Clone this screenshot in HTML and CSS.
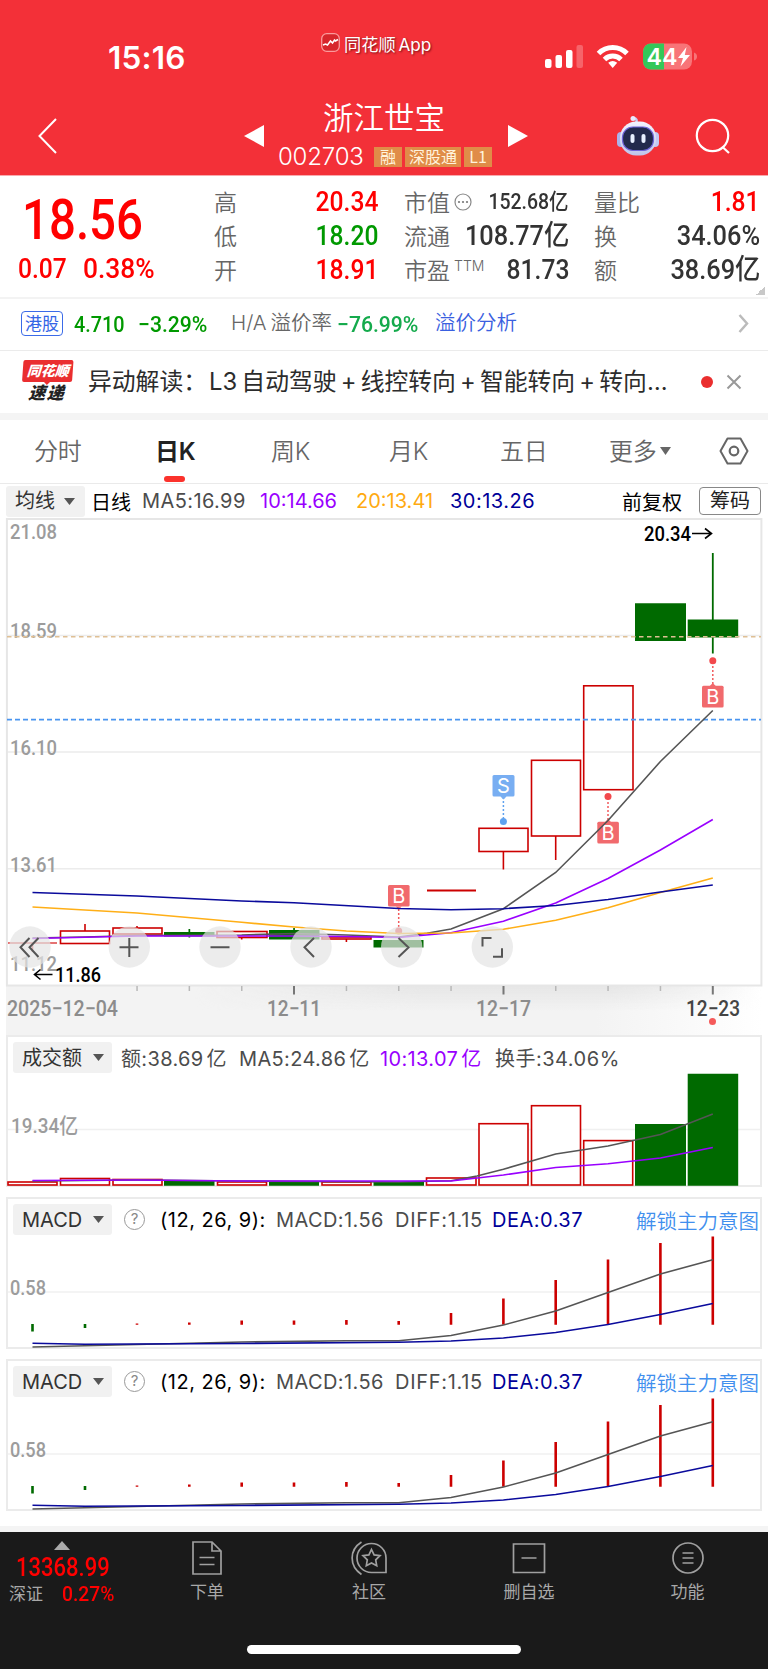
FILE: index.html
```html
<!DOCTYPE html>
<html lang="zh-CN">
<head>
<meta charset="utf-8">
<title>浙江世宝 002703</title>
<link rel="stylesheet" href="styles.css">
</head>
<body>
<svg width="0" height="0" class="defs">
  <defs>
    <g id="caret"><path d="M0 0h11l-5.500 7z" fill="#555"/></g>
    <g id="macd">
      <path d="M8 1292H760" stroke="#f0f0f0" stroke-width="1.500"/>
      <text x="10" y="1295" class="axis" textLength="36" lengthAdjust="spacingAndGlyphs">0.58</text>
      <path d="M32.500 1324v7.500M85 1324v4" stroke="#006a00" stroke-width="2.600"/>
      <path d="M137 1323.500v1.200M189.300 1322.500v2.200M241.700 1320.500v4.200M294 1320.500v4.200M346.400 1320v4.700M398.700 1321v3.700M451 1313v11.700M503.400 1298.500v26.200M555.700 1280v44.700M608 1259.500v65.200M660.400 1243v81.700M712.800 1236.500v88.200" stroke="#cc0000" stroke-width="2.600"/>
      <polyline class="ma gray" points="32.500,1347 137,1344.500 241.700,1342 346,1340.700 398.700,1340.700 451,1335.500 503.400,1325 555.700,1311 608,1292.500 660.400,1274 712.800,1259.700"/>
      <polyline class="ma navy" points="32.500,1343.300 85,1344.300 241.700,1343.500 398.700,1342.300 451,1341 503.400,1338 555.700,1332.500 608,1324.500 660.400,1314.500 712.800,1303.500"/>
    </g>
  </defs>
</svg>

<header class="top">
  <div class="status">
    <span class="time">15:16</span>
    <span class="brand">
      <svg width="19" height="19" viewBox="0 0 19 19"><rect x=".7" y=".7" width="17.600" height="17.600" rx="5" fill="#d7262c" stroke="#fa9a9c" stroke-width="1.300"/><path d="M2 12l2.500-1 2 1 3-4 2 2 2-3 1 1 2.500-1.500" fill="none" stroke="#fff" stroke-width="1.500"/></svg>
      <b>同花顺 App</b>
    </span>
    <svg class="signals" width="154" height="28" viewBox="544 43 154 28">
      <g fill="#fff"><rect x="545" y="59" width="6.500" height="9" rx="2"/><rect x="555.500" y="55" width="6.500" height="13" rx="2"/><rect x="566" y="50" width="6.500" height="18" rx="2"/><rect x="576.500" y="45" width="6.500" height="23" rx="2" opacity=".25"/></g>
      <g fill="none" stroke="#fff" stroke-width="5"><path d="M598.500 53.500a20 20 0 0 1 28.500 0"/><path d="M604.500 59.500a11.700 11.700 0 0 1 16.500 0"/></g>
      <path d="M612.700 68l-4.500-5.200q4.500-3.600 9 0z" fill="#fff"/>
      <path d="M651 43.500h33a8 8 0 0 1 8 8v10a8 8 0 0 1-8 8h-33a8 8 0 0 1-8-8v-10a8 8 0 0 1 8-8z" fill="#f87478"/>
      <path d="M664 43.500h-13a8 8 0 0 0-8 8v10a8 8 0 0 0 8 8h13z" fill="#34c759"/>
      <path d="M694 52.500q3 1 3 4t-3 4z" fill="#f87478"/>
      <text x="646.500" y="65.300" class="batt" textLength="31" lengthAdjust="spacingAndGlyphs">44</text>
      <path d="M686.500 47l-8.500 11h5l-2.500 8.500 9.500-11.500h-5.200z" fill="#fff"/>
    </svg>
  </div>
  <div class="nav">
    <svg class="back" width="20" height="36" viewBox="0 0 20 36"><path d="M18 1L1.500 18 18 35" fill="none" stroke="#fff" stroke-width="2"/></svg>
    <svg class="prev" width="20" height="22" viewBox="0 0 20 22"><path d="M20 0v22L0 11z" fill="#fff"/></svg>
    <div class="title">
      <h1>浙江世宝</h1>
      <div class="code"><span>002703</span><i class="t1">融</i><i class="t2">深股通</i><i class="t3">L1</i></div>
    </div>
    <svg class="next" width="20" height="22" viewBox="0 0 20 22"><path d="M0 0v22L20 11z" fill="#fff"/></svg>
    <svg class="bot" width="44" height="42" viewBox="0 0 44 42">
      <defs><linearGradient id="bg1" x1="0" y1="0" x2="0" y2="1"><stop offset="0" stop-color="#f4f4ff"/><stop offset="1" stop-color="#bfc4ea"/></linearGradient></defs>
      <path d="M20 8q2-4-2-5" fill="none" stroke="#c8ccf2" stroke-width="2.500"/><circle cx="17" cy="3.500" r="2.500" fill="#e9eaff"/>
      <rect x="1" y="17" width="8" height="15" rx="4" fill="#aab3ea"/><rect x="35" y="17" width="8" height="15" rx="4" fill="#c3c8f2"/>
      <rect x="4" y="6.500" width="36" height="34" rx="16" fill="url(#bg1)"/>
      <rect x="6.500" y="12" width="31" height="23.500" rx="10.500" fill="#222a4c" stroke="#6d63d8" stroke-width="1.200"/>
      <rect x="14.500" y="19" width="4" height="9" rx="2" fill="#e8f0ff"/><rect x="25.500" y="19" width="4" height="9" rx="2" fill="#e8f0ff"/>
    </svg>
    <svg class="search" width="36" height="36" viewBox="0 0 36 36"><g fill="none" stroke="#fff" stroke-width="2.200"><circle cx="17.500" cy="17.500" r="15.700"/><path d="M27.500 29l6.500 6"/></g></svg>
  </div>
</header>

<section class="quote">
  <div class="last">
    <div class="price"><span class="din">18.56</span></div>
    <div class="chg"><span class="din">0.07</span><span class="din wide">0.38%</span></div>
  </div>
  <dl class="col c1">
    <dt>高</dt><dd class="red"><span class="din">20.34</span></dd>
    <dt>低</dt><dd class="green"><span class="din">18.20</span></dd>
    <dt>开</dt><dd class="red"><span class="din">18.91</span></dd>
  </dl>
  <dl class="col c2">
    <dt>市值<svg width="18" height="18" viewBox="0 0 18 18"><circle cx="9" cy="9" r="8" fill="none" stroke="#888" stroke-width="1.200"/><g fill="#777"><circle cx="5" cy="9" r="1.100"/><circle cx="9" cy="9" r="1.100"/><circle cx="13" cy="9" r="1.100"/></g></svg></dt><dd class="small"><span class="din yi">152.68亿</span></dd>
    <dt>流通</dt><dd><span class="din yi">108.77亿</span></dd>
    <dt>市盈<sup>TTM</sup></dt><dd><span class="din">81.73</span></dd>
  </dl>
  <dl class="col c3">
    <dt>量比</dt><dd class="red"><span class="din">1.81</span></dd>
    <dt>换</dt><dd><span class="din yi">34.06%</span></dd>
    <dt>额</dt><dd><span class="din yi">38.69亿</span></dd>
  </dl>
  <i class="corner"></i>
</section>

<section class="hk">
  <span class="tag">港股</span>
  <span class="din g">4.710</span><span class="din g wide">−3.29%</span>
  <span class="ha">H/A 溢价率</span><span class="din g2 wide">−76.99%</span>
  <span class="link">溢价分析</span>
  <svg width="11" height="19" viewBox="0 0 11 19"><path d="M1.500 1l7.500 8.500L1.500 18" fill="none" stroke="#bbb" stroke-width="2.500"/></svg>
</section>

<section class="news">
  <div class="logo"><span class="l1">同花顺</span><span class="l2">速 递</span></div>
  <p>异动解读：<span>L3</span> 自动驾驶 + 线控转向 + 智能转向 + 转向…</p>
  <i class="dot"></i>
  <svg width="16" height="16" viewBox="0 0 16 16"><path d="M1.500 1.500l13 13M14.500 1.500l-13 13" stroke="#999" stroke-width="2"/></svg>
</section>

<nav class="tabs">
  <span>分时</span><span class="on">日K</span><span>周K</span><span>月K</span><span>五日</span>
  <span class="more">更多<svg width="11" height="8" viewBox="0 0 11 8"><path d="M0 0h11L5.500 8z" fill="#666"/></svg></span>
  <svg class="hex" width="30" height="28" viewBox="0 0 30 28"><g fill="none" stroke="#666"><path d="M8.500 1.500h13L28.500 14l-7 12.500h-13L1.500 14z" stroke-width="2" stroke-linejoin="round"/><circle cx="15" cy="14" r="4.300" stroke-width="2.200"/></g></svg>
</nav>

<div class="legend main">
  <span class="pick">均线<svg width="11" height="7"><use href="#caret"/></svg></span>
  <span class="k">日线</span><span class="n1">MA5:16.99</span><span class="p">10:14.66</span><span class="o">20:13.41</span><span class="b">30:13.26</span>
  <span class="k adj">前复权</span><span class="chips">筹码</span>
</div>

<svg class="chart" width="768" height="517" viewBox="0 518 768 517">
  <defs><linearGradient id="ax" x1="0" y1="0" x2="1" y2="0"><stop offset="0" stop-color="#f3f3f3"/><stop offset=".78" stop-color="#f3f3f3"/><stop offset="1" stop-color="#fff"/></linearGradient>
  <linearGradient id="sh" x1="0" y1="0" x2="0" y2="1"><stop offset="0" stop-color="#e6e6e6"/><stop offset="1" stop-color="#e6e6e6" stop-opacity="0"/></linearGradient>
  <linearGradient id="shx" x1="0" y1="0" x2="1" y2="0"><stop offset="0" stop-color="#000"/><stop offset=".25" stop-color="#000"/><stop offset=".55" stop-color="#fff"/><stop offset=".8" stop-color="#fff"/><stop offset="1" stop-color="#000"/></linearGradient>
  <mask id="mk"><rect x="6" y="986" width="756" height="25" fill="url(#shx)"/></mask></defs>
  <rect x="6" y="986" width="756" height="49" fill="url(#ax)"/>
  <rect x="6" y="986" width="756" height="25" fill="url(#sh)" mask="url(#mk)"/>
  <g stroke="#ececec" fill="none" stroke-width="1.500"><path d="M7 635.500H761M7 752H761M7 868.700H761"/><rect x="6.900" y="519" width="754.500" height="466.500" stroke="#e6e6e6" stroke-width="2"/></g>
  <g class="axis">
    <text x="10" y="539" textLength="47" lengthAdjust="spacingAndGlyphs">21.08</text>
    <text x="10" y="638" textLength="47" lengthAdjust="spacingAndGlyphs">18.59</text>
    <text x="10" y="755" textLength="47" lengthAdjust="spacingAndGlyphs">16.10</text>
    <text x="10" y="871.500" textLength="47" lengthAdjust="spacingAndGlyphs">13.61</text>
    <text x="10" y="971" textLength="47" lengthAdjust="spacingAndGlyphs">11.12</text>
  </g>
  <g fill="none" stroke="#cc0000" stroke-width="1.600">
    <path d="M8 943H57M32.500 943v9" stroke="#d44"/>
    <rect x="60.500" y="931" width="49" height="12.500"/><path d="M85 924v7"/>
    <rect x="113" y="928" width="49" height="6"/><path d="M137 926v2"/>
    <rect x="217" y="931.500" width="50" height="6"/><path d="M241.700 937v2.500"/>
    <rect x="322" y="937" width="49" height="2" /><path d="M346.400 939v3"/>
    <path d="M427 890.500H476" stroke-width="2"/>
    <rect x="479" y="828.300" width="49" height="23.200"/><path d="M503.400 852v17.500"/>
    <rect x="531.500" y="760.300" width="49" height="75.700"/><path d="M555.700 836v24"/>
    <rect x="583.700" y="685.800" width="49.300" height="103.900"/>
  </g>
  <g fill="#006a00">
    <path d="M164 932h50.500v4.500H164zM188.500 929h1.700v8.500h-1.700z"/>
    <path d="M269 930h50.500v9.500H269zM293.200 928h1.700v3h-1.700z"/>
    <path d="M373.500 940h50v7.500h-50z"/>
    <path d="M635 603.300h51v37.700h-51z"/>
    <path d="M687.700 619.500h50.500v18h-50.500zM711.900 553h1.800v100.500h-1.800z"/>
  </g>
  <path d="M7 636.800H761" stroke="#dfbf94" stroke-width="1.500" stroke-dasharray="4.500 3.500"/>
  <path d="M7 719.600H761" stroke="#4a95f0" stroke-width="1.800" stroke-dasharray="5 3"/>
  <g class="marks">
    <path class="rd" d="M398.700 909v22M608 798v24M712.800 662v24"/><path class="bd" d="M503.400 797v22"/>
    <circle cx="398.700" cy="931" r="3.500"/><circle cx="608" cy="796.500" r="3.500"/><circle cx="712.800" cy="660.700" r="3.500"/><circle cx="503.400" cy="821.500" r="3.500" fill="#5fa2ef"/>
    <g fill="#f16a6d"><rect x="388" y="885" width="21.600" height="21.600" rx="1.500"/><rect x="597.300" y="821.800" width="21.600" height="21.600" rx="1.500"/><rect x="702" y="685.800" width="21.600" height="21.600" rx="1.500"/><path d="M605 822l3-3 3 3zM709.800 686l3-3 3 3zM395.700 906.500l3 3 3-3z"/></g>
    <path d="M494 775h19a1.500 1.500 0 0 1 1.500 1.500v18.600a1.500 1.500 0 0 1-1.500 1.500h-6.500l-3 3-3-3H494a1.500 1.500 0 0 1-1.500-1.500v-18.600a1.500 1.500 0 0 1 1.500-1.500z" fill="#78aef2"/>
    <text x="398.800" y="902.700">B</text><text x="608" y="839.500">B</text><text x="712.800" y="703.500">B</text><text x="503.400" y="792.700">S</text>
  </g>
  <polyline class="ma gray" points="32.500,938 85,937 137,935.500 241.700,935 294,933.500 346.400,935 398.700,937 427,933.200 451,929 503.400,908.700 555.700,872.500 608,820.500 660.400,761.500 712.800,710.500"/>
  <polyline class="ma purple" points="32.500,938.500 85,937.300 137,936 294,936 346.400,936.500 398.700,937.500 451,932.700 503.400,921.200 555.700,903 608,878.500 660.400,850 712.800,819.500"/>
  <polyline class="ma orange" points="32.500,907 137,913 241.700,922.300 294,927 346.400,931 398.700,933.500 451,933 503.400,929.300 555.700,920.300 608,907.700 660.400,892.500 712.800,878"/>
  <polyline class="ma navy" points="32.500,892.500 137,896 241.700,901 294,902.700 398.700,908.500 451,909.700 503.400,908.700 555.700,905.500 608,899.500 660.400,892 712.800,885"/>
  <g class="peak"><text x="644" y="541" textLength="47" lengthAdjust="spacingAndGlyphs">20.34</text><path d="M692 533.500h19M705 528.500l6.500 5-6.500 5"/>
  <text x="55" y="982" textLength="46" lengthAdjust="spacingAndGlyphs">11.86</text><path d="M34 974.500h18.500M40.500 969.500l-6 5 6 5"/></g>
  <g class="fab">
    <g fill="#e4e4e4" fill-opacity=".7"><circle cx="30" cy="947" r="20.700"/><circle cx="129.300" cy="947" r="20.700"/><circle cx="220" cy="947" r="20.700"/><circle cx="311" cy="947" r="20.700"/><circle cx="401.700" cy="947" r="20.700"/><circle cx="492.300" cy="947" r="20.700"/></g>
    <path d="M29.500 938l-9 9.300 9 9.700M38.500 938l-9 9.300 9 9.700M119.500 947.300h19M129.300 938v19M210.500 947.300h19M314 938l-9.500 9.300 9.500 9.700M398.500 938l10 9.500-10 9.500"/>
    <path d="M482.500 946.500v-8.500h9M493 956.700h9v-8.500"/>
  </g>
  <g fill="#b8b8b8"><path d="M136.300 986h1.500v5h-1.500zM188.600 986h1.500v5h-1.500zM241 986h1.500v5h-1.500zM345.700 986h1.500v5h-1.500zM398 986h1.500v5h-1.500zM450.300 986h1.500v5h-1.500zM555 986h1.500v5h-1.500zM607.300 986h1.500v5h-1.500zM659.700 986h1.500v5h-1.500z"/><path d="M293 986h2v8.500h-2zM502.500 986h2v8.500h-2zM711.800 986h2v8.500h-2z" fill="#777"/></g>
  <g class="date">
    <text x="7" y="1016" textLength="111" lengthAdjust="spacingAndGlyphs">2025−12−04</text>
    <text x="267" y="1016" textLength="54" lengthAdjust="spacingAndGlyphs">12−11</text>
    <text x="476" y="1016" textLength="55" lengthAdjust="spacingAndGlyphs">12−17</text>
    <text x="686" y="1016" textLength="54" lengthAdjust="spacingAndGlyphs" class="today">12−23</text>
  </g>
  <circle cx="712.500" cy="1021.500" r="3.500" fill="#f55a5a"/>
</svg>

<section class="panel">
  <div class="legend vol">
    <span class="pick">成交额<svg width="11" height="7"><use href="#caret"/></svg></span>
    <span class="n2">额:38.69 亿</span><span class="n3">MA5:24.86 亿</span><span class="p n4">10:13.07 亿</span><span class="n5">换手:34.06%</span>
  </div>
  <svg width="752" height="112" viewBox="8 1073 752 112">
    <path d="M8 1129.500H760" stroke="#f0f0f0" stroke-width="1.500"/>
    <text x="11" y="1132.500" class="axis" textLength="67" lengthAdjust="spacingAndGlyphs">19.34亿</text>
    <g fill="#fff" stroke="#cc0000" stroke-width="1.600">
      <rect x="8" y="1182" width="49" height="3"/><rect x="60.500" y="1178.500" width="49" height="6.500"/><rect x="113" y="1179.500" width="49" height="5.500"/><rect x="217.500" y="1182" width="49" height="3"/><rect x="322" y="1182" width="49" height="3"/><rect x="426.500" y="1178" width="49.500" height="7"/>
      <rect x="479" y="1123.700" width="49" height="61.300"/><rect x="531.500" y="1105.700" width="49" height="79.300"/><rect x="583.700" y="1140.600" width="49" height="44.400"/>
    </g>
    <path d="M164 1181h50.500v4.700H164zM269 1181.500h50v4.200h-50zM373.500 1182h50.500v3.700h-50.500zM635 1124h51v61.700h-51zM687.700 1073.700h50.500v112h-50.500z" fill="#006a00"/>
    <polyline class="ma gray" points="32.500,1181 137,1180 241.700,1181 398.700,1182 451,1180.700 477,1176 503.400,1169.300 555.700,1154 608,1146 660.400,1134.500 712.800,1114"/>
    <polyline class="ma purple" points="32.500,1180.500 137,1180 241.700,1181 346.400,1181 451,1181 503.400,1175 555.700,1167.500 608,1163.700 660.400,1158 712.800,1147.500"/>
  </svg>
</section>

<section class="panel">
  <div class="legend mac">
    <span class="pick">MACD<svg width="11" height="7"><use href="#caret"/></svg></span>
    <span class="help">?</span><span class="k m1">(12, 26, 9):</span><span class="m2">MACD:1.56</span><span class="m3">DIFF:1.15</span><span class="b m4">DEA:0.37</span><span class="unlock">解锁主力意图</span>
  </div>
  <svg width="752" height="112" viewBox="8 1235 752 112"><use href="#macd"/></svg>
</section>

<section class="panel">
  <div class="legend mac">
    <span class="pick">MACD<svg width="11" height="7"><use href="#caret"/></svg></span>
    <span class="help">?</span><span class="k m1">(12, 26, 9):</span><span class="m2">MACD:1.56</span><span class="m3">DIFF:1.15</span><span class="b m4">DEA:0.37</span><span class="unlock">解锁主力意图</span>
  </div>
  <svg width="752" height="112" viewBox="8 1235 752 112"><use href="#macd"/></svg>
</section>

<footer>
  <div class="bar">
    <div class="index">
      <svg width="16" height="9" viewBox="0 0 16 9"><path d="M8 0l8 9H0z" fill="#aaa"/></svg>
      <div class="pts"><span class="din">13368.99</span></div>
      <div class="sz"><span>深证</span><span class="din wide">0.27%</span></div>
    </div>
    <div class="item i1"><svg width="34" height="34" viewBox="0 0 34 34"><path d="M3 1h19l9 9v23H3zM22 1v9h9M9.500 16.500h15M9.500 23.500h15"/></svg><span>下单</span></div>
    <div class="item i2"><svg width="36" height="34" viewBox="0 0 36 34"><path d="M10.500 1C-2 9-2 25 10.500 33.500M20.500 2.500a14.500 14.500 0 1 0 0 29H35V17A14.500 14.500 0 0 0 20.500 2.500z"/><path d="M20.500 8.500l2.600 5.400 5.900.8-4.300 4.100 1 5.900-5.200-2.800-5.200 2.800 1-5.900-4.300-4.100 5.900-.8z"/></svg><span>社区</span></div>
    <div class="item i3"><svg width="34" height="34" viewBox="0 0 34 34"><path d="M1.500 3h31v28.500h-31zM9.500 17h15"/></svg><span>删自选</span></div>
    <div class="item i4"><svg width="34" height="34" viewBox="0 0 34 34"><circle cx="17" cy="17" r="15"/><path d="M11.500 12h11M11.500 17h11M11.500 22h11"/></svg><span>功能</span></div>
  </div>
  <i class="home"></i>
</footer>
</body>
</html>
```

FILE: styles.css
```css
* { box-sizing: border-box; }
body { margin: 0; width: 768px; height: 1669px; overflow: hidden; background: #fff; color: #333; font-family: Inter, "Noto Sans CJK SC", sans-serif; font-weight: 400; }
i { font-style: normal; }
svg { display: block; flex: none; overflow: visible; }
.defs { position: absolute; }
.din { display: inline-block; font-family: Roboto, "Noto Sans CJK SC", sans-serif; font-weight: 500; transform: scaleX(.88); transform-origin: left center; white-space: nowrap; }
.din.wide { transform: scaleX(.94); }
.din.yi { transform: scaleX(.905); }
.red { color: #ff0000; }
.green { color: #009900; }

.top { height: 176px; background: #f33038; color: #fff; border-bottom: 1px solid #f9a9ad; }
.status { height: 113px; display: flex; padding-top: 33px; }
.time { width: 213px; margin-left: 108px; padding-top: 6px; font-size: 31.500px; line-height: 38px; font-weight: 600; letter-spacing: .2px; }
.brand { display: flex; gap: 4px; width: 223px; }
.brand b { font-size: 17.200px; line-height: 23px; font-weight: 400; text-shadow: 1px 1px 2px #7a1015; white-space: nowrap; word-spacing: -2px; }
.signals { margin-top: 10px; }
.batt { font: 600 23.500px Inter, sans-serif; fill: #fff; }
.nav { height: 62px; display: flex; }
.back { margin: 5px 0 0 38px; }
.prev { margin: 12px 0 0 186px; }
.title { width: 244px; height: 62px; margin-top: -15px; display: flex; flex-direction: column; align-items: center; }
h1 { margin: 0 4px 0 0; font-size: 30.500px; line-height: 40px; font-weight: 350; }
.code { display: flex; align-items: center; height: 26px; margin-top: 6px; width: 216px; }
.code span { flex: none; width: 96px; font-size: 24px; font-weight: 350; letter-spacing: -.2px; line-height: 26px; }
.code i { flex: none; height: 20px; background: #e08c48; color: #fff3dc; font-size: 16px; line-height: 19px; text-align: center; font-family: "Noto Sans CJK SC", sans-serif; margin-right: 3px; }
.t1 { width: 28px; } .t2 { width: 56px; } .t3 { width: 28px; }
.next { margin-top: 12px; }
.bot { margin: 2px 0 0 88px; }
.search { margin: 5px 0 0 35px; }

.quote { height: 123px; display: flex; border-bottom: 2px solid #f3f3f3; }
.last { width: 214px; color: #ff0000; }
.price { padding: 15px 0 0 22px; font-size: 55px; line-height: 56px; }
.price .din { transform: scaleX(.862); }
.chg { padding: 6px 0 0 18px; display: flex; font-size: 28px; line-height: 30px; }
.chg .din:first-child { width: 65px; }
.col { margin: 9px 0 0; display: grid; grid-template-rows: 34px 34px 34px; grid-template-columns: auto 1fr; height: 102px; line-height: 34px; }
.c1 { width: 164px; } .c2 { width: 165px; margin-left: 26px; } .c3 { width: 166px; margin-left: 25px; }
.c3 .red { padding-right: 1px; margin-right: -1px; }
dt { font: 350 23px/32px "Noto Sans CJK SC", sans-serif; color: #666; display: flex; white-space: nowrap; }
dt svg { margin: 8px 0 0 4px; }
dt sup { font: 300 14px/26px Inter, sans-serif; margin-left: 4px; }
dd { margin: 0; font-size: 28px; display: flex; justify-content: flex-end; min-width: 0; }
dd .din { transform-origin: right center; }
.small { font-size: 21.500px; }
.corner { width: 9px; height: 9px; margin: 110px 0 0 -4px; background: linear-gradient(135deg, transparent 50%, #c8c8c8 50%); }

.hk { height: 52px; display: flex; align-items: center; padding-bottom: 2px; border-bottom: 1px solid #ebebeb; font-size: 22.500px; }
.tag { width: 42px; height: 25px; margin-left: 21px; border: 1px solid #3b6be8; border-radius: 4px; color: #3465e6; font: 400 17px/22px "Noto Sans CJK SC", sans-serif; text-align: center; }
.g { color: #009900; } .g2 { color: #14aa4c; }
.hk .din:nth-child(2) { width: 64px; margin-left: 11px; }
.hk .din:nth-child(3) { width: 93px; }
.ha { width: 106px; color: #666; font-size: 20.500px; font-weight: 350; line-height: 24px; padding-bottom: 2px; white-space: nowrap; word-spacing: -2px; }
.g2 { width: 98px; }
.link { width: 303px; color: #3a60e0; font-size: 20.500px; font-weight: 350; line-height: 24px; padding-bottom: 2px; }

.news { height: 69px; display: flex; align-items: center; border-bottom: 7px solid #f4f4f4; }
.logo { width: 50px; margin-left: 22px; margin-right: 2px; text-align: center; font-style: italic; font-weight: 900; transform: skewX(-4deg); margin-top: -1px; }
.logo span { display: block; white-space: nowrap; }
.l1 { height: 22px; background: #ea2e30; color: #fff; border-radius: 2px; font-size: 14px; line-height: 21px; position: relative; }
.l1::after { content: ""; position: absolute; left: 21px; top: 21px; border: 4px solid transparent; border-top-color: #ea2e30; border-bottom: 0; }
.l2 { font-size: 17px; line-height: 22px; color: #222; word-spacing: -2px; }
.news p { margin: 0 0 0 14px; width: 613px; font: 400 23.800px/40px Inter, "Noto Sans CJK SC", sans-serif; color: #2c2c2c; white-space: nowrap; word-spacing: -2.500px; }
.news p span { margin-left: 2px; }
.dot { width: 12px; height: 12px; border-radius: 50%; background: #ea2e2e; margin-right: 13px; }

.tabs { height: 64px; display: flex; padding-left: 34px; border-bottom: 1px solid #eaeaea; color: #666; font-size: 24px; font-weight: 350; line-height: 63px; }
.tabs span { width: 116px; white-space: nowrap; letter-spacing: -.3px; }
.tabs span:nth-child(1) { width: 121px; }
.tabs .on { font-weight: 600; color: #222; position: relative; }
.tabs .on::after { content: ""; position: absolute; left: 9px; top: 56px; width: 21px; height: 6px; border-radius: 3px; background: #fb322c; }
.tabs span:nth-child(3) { width: 118px; }
.tabs span:nth-child(4) { width: 111px; }
.tabs span:nth-child(5) { width: 109px; }
.tabs .more { display: flex; width: 110px; }
.more svg { margin: 27px 0 0 4px; }
.hex { margin-top: 17px; }

.legend { display: flex; align-items: center; font-size: 20px; color: #4c4c4c; white-space: nowrap; }
.legend > span { flex: none; }
.pick { display: flex; align-items: center; justify-content: space-between; height: 31px; padding: 0 8px 0 9px; background: #f1f1f1; border-radius: 3px; color: #333; line-height: 32px; }
.k { color: #000; } .p { color: #9900ff; } .o { color: #ffaa11; } .b { color: #000099; }
.main { height: 34px; padding-left: 6px; }
.main .pick { width: 79px; margin-right: 6px; padding-right: 10px; }
.main .k { width: 51px; }
.n1 { width: 118px; letter-spacing: .4px; } .main .p { width: 96px; } .main .o { width: 94px; } .main .b { width: 172px; letter-spacing: .5px; }
.main .adj { width: 77px; }
.chips { width: 62px; height: 28px; border: 1px solid #888; border-radius: 4px; text-align: center; line-height: 27px; color: #222; }

.axis { font: 500 21px Roboto, "Noto Sans CJK SC", sans-serif; fill: #9c9c9c; }
.date { font: 500 21.500px Roboto, sans-serif; fill: #8c8c8c; }
.today { fill: #444; font-weight: 500; }
.ma { fill: none; stroke-width: 1.600; }
.gray { stroke: #555; } .purple { stroke: #9900ff; } .orange { stroke: #ffaf17; } .navy { stroke: #0a0a9c; }
.marks { fill: #f2494d; font: 400 20px Inter, sans-serif; text-anchor: middle; }
.marks text { fill: #fff; }
.rd, .bd { stroke: #f2595c; stroke-width: 1.500; stroke-dasharray: 2 2; }
.bd { stroke: #5fa2ef; }
.peak { font: 500 21px Roboto, sans-serif; fill: #000; }
.peak path { fill: none; stroke: #000; stroke-width: 1.600; }
.fab path { fill: none; stroke: #555; stroke-width: 2; }

.panel { width: 756px; height: 152px; margin: 0 6px 10px; border: 2px solid #ebebeb; }
.panel .legend { height: 36px; padding: 5px 0 0 5px; }
.panel .pick { width: 99px; margin-right: 9px; }
.vol > span { word-spacing: -3px; letter-spacing: .35px; }
.vol .pick { letter-spacing: 0; }
.n2 { width: 118px; } .n3 { width: 141px; } .vol .n4 { width: 115px; } .vol .n5 { letter-spacing: .5px; }
.mac .pick { margin-right: 12px; }
.help { width: 21px; height: 21px; margin-right: 15px; border: 1.500px solid #999; border-radius: 50%; font-size: 15px; line-height: 18px; text-align: center; color: #888; }
.m1 { width: 116px; letter-spacing: .5px; } .m2 { width: 119px; letter-spacing: .4px; } .m3 { width: 97px; letter-spacing: .7px; } .m4 { width: 144px; letter-spacing: .5px; }
.unlock { color: #418fee; font-size: 20.500px; font-weight: 350; }

footer { height: 143px; margin-top: 15px; border-top: 6px solid #f4f4f4; background: #1a1a1a; color: #a8a8a8; }
.bar { display: flex; height: 113px; }
.index { flex: none; width: 130px; }
.index > svg { margin: 9px 0 0 54px; }
.pts { padding-left: 16px; height: 34px; color: #ff0000; font-size: 25px; line-height: 34px; }
.sz { display: flex; padding-left: 9px; font-size: 17px; line-height: 20px; }
.sz span:first-child { width: 53px; }
.sz .din { color: #ff0000; font-size: 20.500px; }
.bar .din { font-weight: 500; }
.item { flex: none; display: flex; flex-direction: column; align-items: center; padding-top: 9px; font-size: 17px; }
.i1 { width: 154px; } .i2 { width: 170px; } .i3 { width: 150px; } .i4 { width: 167px; }
.item span { margin-top: 4px; line-height: 26px; }
.item svg { fill: none; stroke: #a0a0a0; stroke-width: 1.700; }
.home { display: block; width: 274px; height: 9px; border-radius: 5px; background: #fff; margin-left: 247px; }
```
